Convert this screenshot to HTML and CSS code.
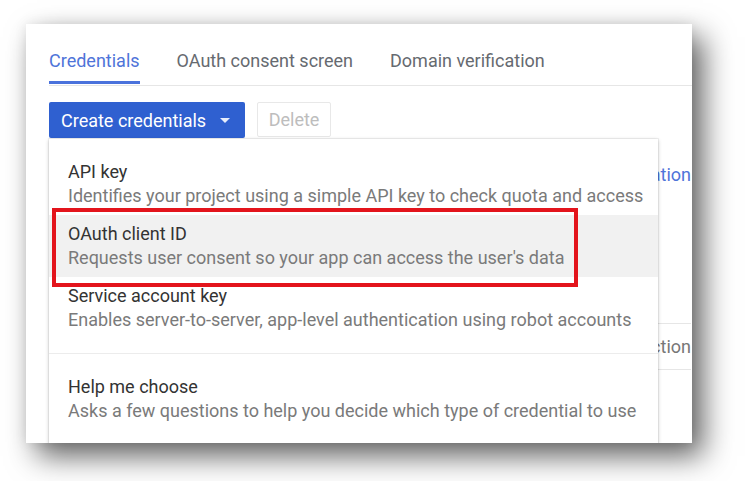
FILE: index.html
```html
<!DOCTYPE html>
<html>
<head>
<meta charset="utf-8">
<link rel="stylesheet" href="styles.css">
</head>
<body>
<div class="card">
  <div class="tabs">
    <div class="tab active">Credentials</div>
    <div class="tab">OAuth consent screen</div>
    <div class="tab">Domain verification</div>
  </div>
  <div class="toolbar">
    <button class="btn-primary">Create credentials <span class="caret"></span></button>
    <button class="btn-disabled">Delete</button>
    <div class="menu">
      <div class="item">
        <div class="title">API key</div>
        <div class="desc">Identifies your project using a simple API key to check quota and access</div>
      </div>
      <div class="item selected">
        <div class="title">OAuth client ID</div>
        <div class="desc">Requests user consent so your app can access the user's data</div>
        <div class="highlight-box"></div>
      </div>
      <div class="item">
        <div class="title">Service account key</div>
        <div class="desc">Enables server-to-server, app-level authentication using robot accounts</div>
      </div>
      <div class="divider"></div>
      <div class="item">
        <div class="title">Help me choose</div>
        <div class="desc">Asks a few questions to help you decide which type of credential to use</div>
      </div>
    </div>
  </div>
  <div class="content">
    <p class="intro">Create credentials to access your enabled APIs. <span class="link">Refer to the API documentation</span></p>
    <div class="table">
      <div class="row">Name &nbsp; Creation date &nbsp; Type &nbsp; Client ID &nbsp; Action</div>
    </div>
  </div>
</div>
</body>
</html>
```
FILE: styles.css
```css
html, body {
  margin: 0;
  padding: 0;
  background: #ffffff;
}
body {
  font-family: Roboto, "Noto Sans", Arial, sans-serif;
  width: 748px;
  height: 481px;
  overflow: hidden;
}
.card {
  position: relative;
  margin: 24px 0 0 26px;
  width: 666px;
  height: 419px;
  background: #fff;
  overflow: hidden;
  box-shadow: 11px 13px 28px rgba(0, 0, 0, 0.62), 0 0 12px rgba(0, 0, 0, 0.08);
  padding-left: 23px;
  box-sizing: border-box;
}
.tabs {
  display: flex;
  gap: 37px;
  border-bottom: 1px solid #e6e6e6;
  padding-bottom: 1px;
}
.tab {
  padding: 27px 0 10px;
  font-size: 18px;
  line-height: 20px;
  color: #666a70;
  border-bottom: 3px solid transparent;
}
.tab.active {
  color: #4f74d9;
  border-bottom-color: #4a72dc;
}
.toolbar {
  position: relative;
  display: flex;
  gap: 12px;
  margin-top: 16px;
}
.btn-primary {
  display: flex;
  align-items: center;
  height: 36px;
  width: 196px;
  padding: 0 0 0 12px;
  border: none;
  border-radius: 2px;
  background: #2f60d0;
  color: #fff;
  font-family: inherit;
  font-size: 18px;
  box-sizing: border-box;
}
.caret {
  display: inline-block;
  margin-left: 14px;
  width: 0;
  height: 0;
  border-left: 5px solid transparent;
  border-right: 5px solid transparent;
  border-top: 5px solid #e8eefb;
}
.btn-disabled {
  height: 35px;
  width: 74px;
  border: 1px solid #e8e8e8;
  border-radius: 2px;
  background: #fff;
  color: #bdbdbd;
  font-family: inherit;
  font-size: 18px;
  box-sizing: border-box;
}
.menu {
  position: absolute;
  top: 37px;
  left: 0;
  width: 609px;
  background: #fff;
  box-shadow: 0 1px 4px rgba(0, 0, 0, 0.22), 0 0 0 1px rgba(0, 0, 0, 0.05);
  padding: 14px 0 14px;
  z-index: 2;
}
.item {
  position: relative;
  padding: 8px 19px 9px;
  height: 62px;
  box-sizing: border-box;
}
.item.selected {
  background: #f1f1f1;
}
.title {
  font-size: 18px;
  line-height: 21px;
  color: #333;
}
.desc {
  margin-top: 3px;
  font-size: 18px;
  line-height: 21px;
  color: #7a7a7a;
  white-space: nowrap;
}
.divider {
  margin: 14px 0 14px;
  border-top: 1px solid #ececec;
}
.highlight-box {
  position: absolute;
  top: -7px;
  left: 3px;
  width: 526px;
  height: 79px;
  border: 4px solid #e3141c;
  box-sizing: border-box;
}
.content {
  margin-right: 1px;
}
.intro {
  margin: 27px 0 0;
  line-height: 20px;
  font-size: 18px;
  color: #5f6368;
  white-space: nowrap;
  text-align: right;
}
.link {
  color: #4f74d9;
}
.table {
  margin-top: 138px;
  border-top: 1px solid #e6e6e6;
  border-bottom: 1px solid #e6e6e6;
}
.row {
  height: 45px;
  line-height: 45px;
  font-size: 18px;
  color: #777;
  white-space: nowrap;
  text-align: right;
}
```
